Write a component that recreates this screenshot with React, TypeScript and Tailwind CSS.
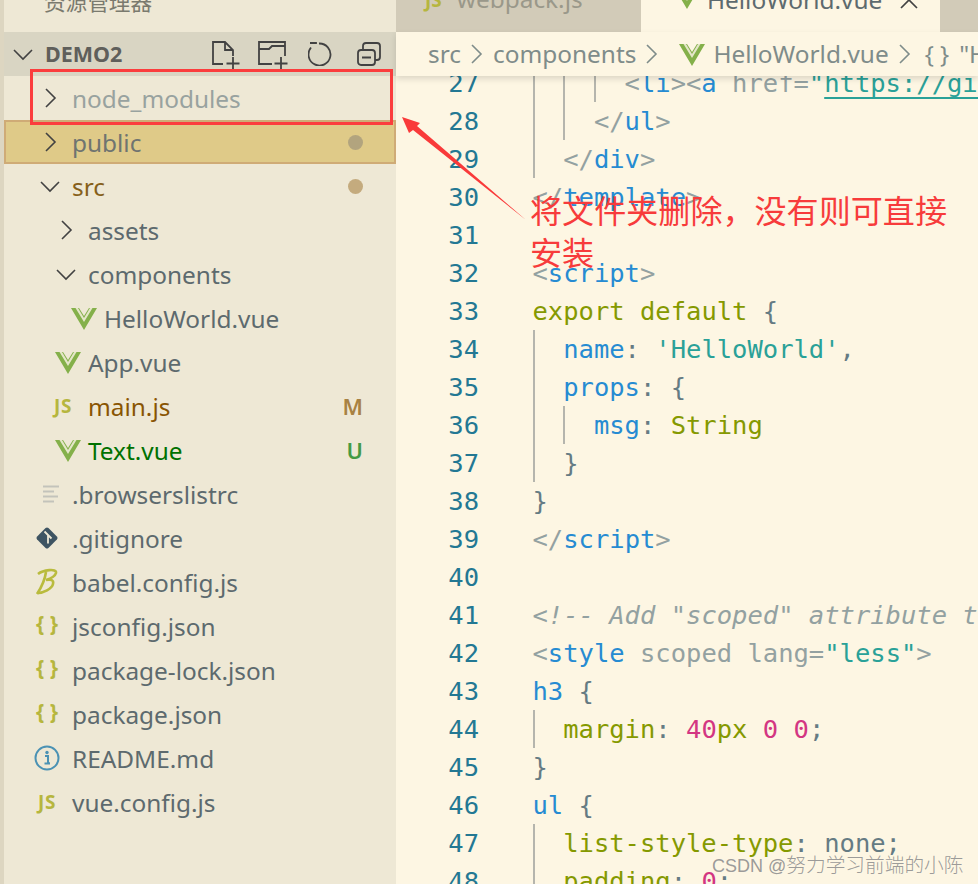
import React from "react";

const Vue = ({ className = "" }: { className?: string }) => (
  <svg viewBox="0 0 26 23" className={`shrink-0 ${className}`} width="26" height="23">
    <polygon points="0,1 8,1 13,9 18,1 26,1 13,23" fill="#84b04a" />
    <polygon points="4.500,1 7,1 13,11 19,1 21.500,1 13,15" fill="#e4e6c8" />
  </svg>
);

const Chevron = ({ down = false }: { down?: boolean }) => (
  <svg width="22" height="22" viewBox="0 0 22 22" fill="none" stroke="#424242" strokeWidth="1.6" className="shrink-0">
    {down ? <path d="M2 7l9 9 9-9" /> : <path d="M7 2l9 9-9 9" />}
  </svg>
);

const JsIcon = () => <span className="-ml-[6px] font-bold text-[19px] leading-none tracking-[0.5px] text-[#b6b63e] font-['Noto_Sans',sans-serif]">JS</span>;
const JsonIcon = () => <span className="-ml-[6px] font-bold text-[21px] leading-none text-[#b6b63e] font-['Noto_Sans',sans-serif] -mt-[5px]">{"{ }"}</span>;
const ListIcon = () => (
  <svg width="18" height="18" viewBox="0 0 18 18" stroke="#c3c3bb" strokeWidth="2.2" className="shrink-0 ml-[2px]">
    <path d="M1 1.500h16M1 6.500h11M1 11.500h15M1 16.500h11" />
  </svg>
);
const GitIcon = () => (
  <svg width="24" height="24" viewBox="0 0 24 24" className="shrink-0 -ml-[6px]">
    <rect x="4" y="4" width="16" height="16" rx="2" transform="rotate(45 12 12)" fill="#3e5462" />
    <path d="M9.500 5.500l3.500 3.500M13 9v8.500M13 9l3.500 3.500" stroke="#eee8d5" strokeWidth="1.8" fill="none" />
  </svg>
);
const BabelIcon = () => (
  <svg width="24" height="28" viewBox="0 0 24 28" fill="none" stroke="#b9bb3d" strokeWidth="2.6" className="shrink-0 -ml-[6px]">
    <path d="M3 6C8 2 22 0 21 5c-1 4-7 6-10 7 5-1 8 0 7 4-1 5-10 9-15 9" />
    <path d="M11 4C10 11 6 20 2 26" />
  </svg>
);
const InfoIcon = () => (
  <svg width="26" height="26" viewBox="0 0 26 26" fill="none" className="shrink-0 -ml-[6px]">
    <circle cx="13" cy="13" r="11.500" stroke="#4b92b4" strokeWidth="2" />
    <path d="M11 11h3v7h1.500M10.500 18.500h5.500" stroke="#4b92b4" strokeWidth="2" />
    <circle cx="13" cy="7.500" r="1.700" fill="#4b92b4" />
  </svg>
);

type RowProps = {
  depth: 0 | 1 | 2;
  icon: React.ReactNode;
  label: string;
  color?: string;
  selected?: boolean;
  dot?: string;
  status?: React.ReactNode;
};

const depthPad = { 0: "pl-[36px]", 1: "pl-[52px]", 2: "pl-[68px]" };

const Row = ({ depth, icon, label, color = "text-[#5d6a6e]", selected, dot, status }: RowProps) => (
  <div className={`flex items-center h-[44px] ${depthPad[depth]} pr-[33px] ${selected ? "bg-[#dfca88] border-2 border-[#cfab76]" : ""}`}>
    <span className={`w-[32px] flex items-center justify-center shrink-0 pr-[12px] ${selected ? "-ml-[2px]" : ""}`}>{icon}</span>
    <span className={`flex-1 text-[24.4px] mt-[2px] ${color}`}>{label}</span>
    {dot && <span className={`w-[15px] h-[15px] rounded-full ${selected ? "-mr-[2px]" : ""} ${dot}`} />}
    {status}
  </div>
);

const K = "text-[#859900]";
const B = "text-[#268bd2]";
const G = "text-[#93a1a1]";
const S = "text-[#2aa198]";
const M = "text-[#d33682]";
const T = "text-[#657b83]";

type Seg = [string, string];
const lines: { n: number; g: number; s: Seg[] }[] = [
  { n: 27, g: 3, s: [[G, "<"], [B, "li"], [G, ">"], [G, "<"], [B, "a"], [G, " href="], [S, '"'], ["text-[#2aa198] underline underline-offset-[5px]", "https://github.com/vuejs"]] },
  { n: 28, g: 2, s: [[G, "</"], [B, "ul"], [G, ">"]] },
  { n: 29, g: 1, s: [[G, "</"], [B, "div"], [G, ">"]] },
  { n: 30, g: 0, s: [[G, "</"], [B, "template"], [G, ">"]] },
  { n: 31, g: 0, s: [] },
  { n: 32, g: 0, s: [[G, "<"], [B, "script"], [G, ">"]] },
  { n: 33, g: 0, s: [[K, "export default "], [T, "{"]] },
  { n: 34, g: 1, s: [[B, "name"], [T, ": "], [S, "'HelloWorld'"], [T, ","]] },
  { n: 35, g: 1, s: [[B, "props"], [T, ": {"]] },
  { n: 36, g: 2, s: [[B, "msg"], [T, ": "], [K, "String"]] },
  { n: 37, g: 1, s: [[T, "}"]] },
  { n: 38, g: 0, s: [[T, "}"]] },
  { n: 39, g: 0, s: [[G, "</"], [B, "script"], [G, ">"]] },
  { n: 40, g: 0, s: [] },
  { n: 41, g: 0, s: [["text-[#93a1a1] italic", '<!-- Add "scoped" attribute to limit CSS']] },
  { n: 42, g: 0, s: [[G, "<"], [B, "style"], [G, " scoped lang="], [S, '"less"'], [G, ">"]] },
  { n: 43, g: 0, s: [[B, "h3"], [T, " {"]] },
  { n: 44, g: 1, s: [[K, "margin"], [T, ": "], [M, "40"], [K, "px"], [T, " "], [M, "0"], [T, " "], [M, "0"], [T, ";"]] },
  { n: 45, g: 0, s: [[T, "}"]] },
  { n: 46, g: 0, s: [[B, "ul"], [T, " {"]] },
  { n: 47, g: 1, s: [[K, "list-style-type"], [T, ": none;"]] },
  { n: 48, g: 1, s: [[K, "padding"], [T, ": "], [M, "0"], [T, ";"]] },
];

const HeaderIcons = () => (
  <div className="flex items-center pr-[15px]">
    <svg width="28" height="30" viewBox="0 0 28 30" fill="none" stroke="#424242" strokeWidth="1.800" className="mt-[4px]">
      <path d="M11 23H1V1h12l8 8v6M13 1v8h8M21 16v13M14.500 22.500h13" />
    </svg>
    <svg width="30" height="30" viewBox="0 0 30 30" fill="none" stroke="#424242" strokeWidth="1.800" className="ml-[18px] mt-[4px]">
      <path d="M14 23H1V1h26v14M1 8h10l3-3h13M23 16v13M16.500 22.500h13" />
    </svg>
    <svg width="24" height="24" viewBox="0 0 24 24" fill="none" stroke="#424242" strokeWidth="1.800" className="ml-[20px]">
      <path d="M11 1.500a11 11 0 1 1-8 4M2 1h6v1" />
    </svg>
    <svg width="24" height="24" viewBox="0 0 24 24" fill="none" stroke="#424242" strokeWidth="1.800" className="ml-[25px]">
      <rect x="1" y="8" width="17" height="15" rx="3" />
      <path d="M6 7V4a3 3 0 0 1 3-3h11a3 3 0 0 1 3 3v11a3 3 0 0 1-3 3h-2M5 15.500h9" />
    </svg>
  </div>
);

export default function App() {
  return (
    <div className="relative w-[978px] h-[884px] overflow-hidden flex bg-[#fdf6e3] font-['Noto_Sans','Noto_Sans_CJK_SC',sans-serif]">
      <aside className="w-[396px] shrink-0 bg-[#eee8d5] border-l-[4px] border-[#ddd6c1] flex flex-col">
        <div className="h-[32px] overflow-hidden pl-[40px]">
          <div className="-mt-[12px] text-[21.6px] leading-[28px] text-[#7a7a6e]">资源管理器</div>
        </div>
        <div className="h-[44px] bg-[#d9d5c3] flex items-center pl-[9px]">
          <span className="w-[32px] flex items-center justify-center pr-[12px]"><Chevron down /></span>
          <span className="flex-1 font-bold text-[21.5px] text-[#5f5f5b]">DEMO2</span>
          <HeaderIcons />
        </div>
        <Row depth={0} icon={<Chevron />} label="node_modules" color="text-[#98a29f]" />
        <Row depth={0} icon={<Chevron />} label="public" color="text-[#6f7470]" selected dot="bg-[#b2a47e]" />
        <Row depth={0} icon={<Chevron down />} label="src" color="text-[#86601a]" dot="bg-[#c4ab7e]" />
        <Row depth={1} icon={<Chevron />} label="assets" />
        <Row depth={1} icon={<Chevron down />} label="components" />
        <Row depth={2} icon={<Vue className="ml-[3px]" />} label="HelloWorld.vue" />
        <Row depth={1} icon={<Vue className="ml-[3px]" />} label="App.vue" />
        <Row depth={1} icon={<JsIcon />} label="main.js" color="text-[#895503]" status={<span className="text-[22px] font-semibold text-[#a88243]">M</span>} />
        <Row depth={1} icon={<Vue className="ml-[3px]" />} label="Text.vue" color="text-[#007100]" status={<span className="text-[22px] font-semibold text-[#459a45]">U</span>} />
        <Row depth={0} icon={<ListIcon />} label=".browserslistrc" />
        <Row depth={0} icon={<GitIcon />} label=".gitignore" />
        <Row depth={0} icon={<BabelIcon />} label="babel.config.js" />
        <Row depth={0} icon={<JsonIcon />} label="jsconfig.json" />
        <Row depth={0} icon={<JsonIcon />} label="package-lock.json" />
        <Row depth={0} icon={<JsonIcon />} label="package.json" />
        <Row depth={0} icon={<InfoIcon />} label="README.md" />
        <Row depth={0} icon={<JsIcon />} label="vue.config.js" />
      </aside>

      <main className="flex-1 min-w-0 flex flex-col">
        <div className="h-[32px] shrink-0 flex bg-[#d2cbb8] overflow-hidden">
          <div className="w-[245px] pl-[29px] flex items-start gap-[15px]">
            <span className="font-bold text-[19px] text-[#b6b63e] -mt-[14px]">JS</span>
            <span className="text-[24.4px] leading-[32px] text-[#9a988a] -mt-[17px]">webpack.js</span>
          </div>
          <div className="w-[299px] bg-[#fdf6e3] flex items-start pl-[33px]">
            <Vue className="-mt-[14px]" />
            <span className="ml-[7px] text-[24.4px] leading-[32px] text-[#5d6a6e] -mt-[16px]">HelloWorld.vue</span>
            <svg width="18" height="18" viewBox="0 0 18 18" stroke="#424242" strokeWidth="1.7" className="ml-[18px] -mt-[9px] shrink-0"><path d="M1 1l16 16M17 1L1 17" /></svg>
          </div>
        </div>
        <div className="relative z-10 h-[44px] shrink-0 bg-[#fdf6e3] shadow-[0_3px_6px_rgba(0,0,0,0.13)] flex items-center pl-[32px] text-[24.4px] text-[#7f8c8a] whitespace-nowrap overflow-hidden">
          <span>src</span>
          <Bc />
          <span>components</span>
          <Bc />
          <Vue className="ml-[11px] mr-[8px]" />
          <span>HelloWorld.vue</span>
          <Bc />
          <span className="ml-[4px] font-['Noto_Sans',sans-serif] text-[24px]">{"{ }"}</span>
          <span className="ml-[10px]">"H</span>
        </div>
        <div className="flex-1 min-h-0 overflow-hidden font-['DejaVu_Sans_Mono',monospace] text-[25.5px] leading-[38px] whitespace-pre">
          <div className="-mt-[12px]">
            {lines.map((l) => (
              <div key={l.n} className="flex h-[38px]">
                <span className="w-[85px] shrink-0 pr-[2px] text-right text-[#237893]">{l.n}</span>
                <span className="w-[51.500px] shrink-0" />
                {Array.from({ length: l.g }).map((_, i) => (
                  <span key={i} className="w-[30.7px] shrink-0 border-l-2 border-[#b5b5ad]" />
                ))}
                <span>
                  {l.s.map(([c, t], i) => (
                    <span key={i} className={c}>{t}</span>
                  ))}
                </span>
              </div>
            ))}
          </div>
        </div>
      </main>

      {/* annotation overlay */}
      <div className="absolute left-[30px] top-[69px] w-[363px] h-[56px] border-[3px] border-[#fb3d3d]" />
      <svg className="absolute left-0 top-0 pointer-events-none" width="978" height="884" viewBox="0 0 978 884">
        <polygon points="402,117 420,123 417,126 526,220 413,130 409,133" fill="#f93a3a" />
      </svg>
      <div className="absolute left-[530px] top-[188px] w-[425px] text-[32.100px] leading-[42px] text-[#f73b3b] font-['Noto_Sans_CJK_SC',sans-serif]">
        将文件夹删除，没有则可直接安装
      </div>
      <div className="absolute left-[712px] top-[851px] text-[18px] leading-[28px] font-light text-[#8f8f8f]/90 whitespace-nowrap font-['Liberation_Sans','Noto_Sans_CJK_SC',sans-serif]">
        CSDN @<span className="text-[19.700px]">努力学习前端的小陈</span>
      </div>
    </div>
  );
}

function Bc() {
  return (
    <svg width="12" height="22" viewBox="0 0 12 22" fill="none" stroke="#7f8c8a" strokeWidth="1.6" className="mx-[10px] shrink-0">
      <path d="M1 2l9 9-9 9" />
    </svg>
  );
}
